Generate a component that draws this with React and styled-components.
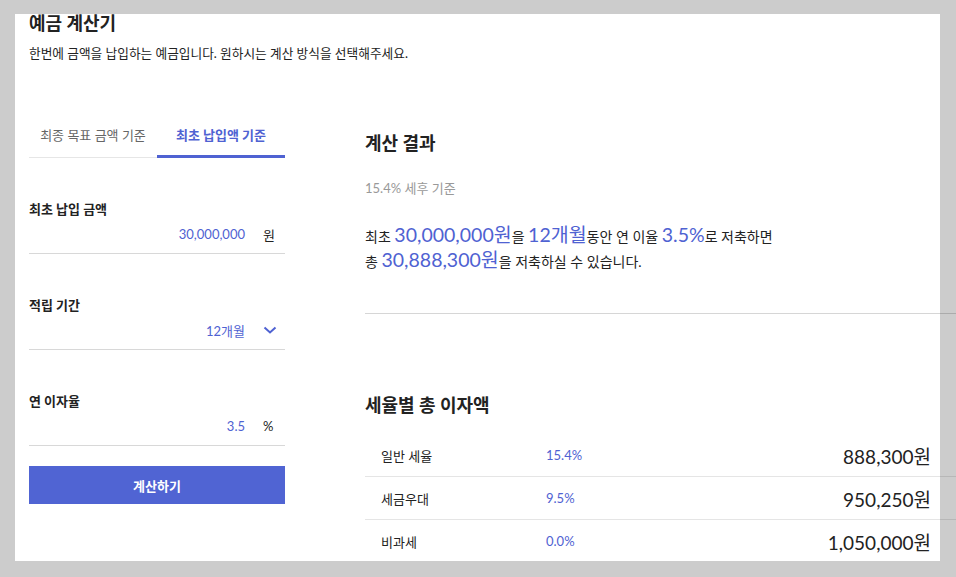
import React, { useState } from "react";
import styled, { createGlobalStyle } from "styled-components";

const GlobalStyle = createGlobalStyle`
    html, body {
        margin: 0;
        padding: 0;
        background: #cccccc;
        overflow: hidden;
    }
    body {
        font-family: Lato, "Noto Sans CJK KR", sans-serif;
        color: #222222;
    }
`;

const BLUE = "#4f62d2";

const Panel = styled.div`
    margin: 15px 16px 15px 15px;
    width: 925px;
    height: 547px;
    background: #ffffff;
    box-sizing: border-box;
    padding-left: 14px;
`;

const Title = styled.h1`
    margin: -1px 0 0;
    font-size: 18px;
    line-height: 18px;
    font-weight: 700;
    color: #222222;
`;

const Desc = styled.p`
    margin: 13px 0 0;
    font-size: 12.7px;
    line-height: 16px;
    color: #222222;
`;

const Body = styled.div`
    display: flex;
    gap: 80px;
    margin-top: 65px;
`;

const LeftColumn = styled.div`
    width: 256px;
    flex-shrink: 0;
`;

const Tabs = styled.div`
    display: flex;
    border-bottom: 1px solid #e6e6e6;
`;

const Tab = styled.div`
    width: 128px;
    text-align: center;
    font-size: 13px;
    line-height: 18px;
    padding-bottom: 11px;
    margin-bottom: -1px;
    cursor: pointer;
    color: ${(p) => (p.$active ? BLUE : "#666666")};
    font-weight: ${(p) => (p.$active ? 700 : 400)};
    border-bottom: 3px solid ${(p) => (p.$active ? BLUE : "transparent")};
`;

const Field = styled.div`
    padding-top: 41px;
    padding-bottom: 9px;
    border-bottom: 1px solid #d8d8d8;
`;

const Label = styled.div`
    font-size: 13px;
    line-height: 20px;
    font-weight: 700;
    color: #222222;
`;

const ValueRow = styled.div`
    display: flex;
    justify-content: flex-end;
    align-items: center;
    margin-top: 5px;
    height: 20px;
    font-size: 13px;
`;

const Value = styled.span`
    color: ${BLUE};
`;

const Unit = styled.span`
    width: 22px;
    margin-left: 18px;
    color: #222222;
    display: flex;
    align-items: center;
`;

const SubmitButton = styled.button`
    display: block;
    width: 100%;
    height: 38px;
    margin-top: 20px;
    border: none;
    background: #5064d3;
    color: #ffffff;
    font-family: inherit;
    font-size: 13px;
    font-weight: 700;
    cursor: pointer;
`;

const RightColumn = styled.div`
    width: 600px;
    flex-shrink: 0;
`;

const SectionTitle = styled.h2`
    margin: ${(p) => p.$top}px 0 0;
    font-size: 18px;
    line-height: 24px;
    font-weight: 700;
    color: #222222;
`;

const Note = styled.div`
    margin-top: 25px;
    font-size: 13px;
    line-height: 16px;
    color: #999999;
`;

const Sentence = styled.p`
    margin: 28px 0 0;
    font-size: 14px;
    line-height: 25px;
    color: #222222;
`;

const Big = styled.span`
    font-size: 19.5px;
    line-height: 1;
    color: ${BLUE};
`;

const Divider = styled.hr`
    margin: 39px 0 0;
    border: none;
    border-top: 1px solid rgba(0, 0, 0, 0.16);
`;

const Table = styled.div`
    margin-top: 17px;
`;

const Row = styled.div`
    display: grid;
    grid-template-columns: 165px 1fr auto;
    align-items: center;
    height: 42px;
    padding: 0 34px 0 16px;
    & + & {
        border-top: 1px solid rgba(0, 0, 0, 0.1);
    }
`;

const RowLabel = styled.span`
    font-size: 13px;
    color: #222222;
`;

const RowRate = styled.span`
    font-size: 13px;
    color: ${BLUE};
`;

const RowAmount = styled.span`
    font-size: 19px;
    color: #222222;
`;

const Chevron = () => (
    <svg width="14" height="8" viewBox="0 0 14 8" fill="none">
        <polyline points="1.5,1.5 7,6.5 12.5,1.5" stroke={BLUE} strokeWidth="2" />
    </svg>
);

const rates = [
    { name: "일반 세율", rate: "15.4%", amount: "888,300원" },
    { name: "세금우대", rate: "9.5%", amount: "950,250원" },
    { name: "비과세", rate: "0.0%", amount: "1,050,000원" },
];

const App = () => {
    const [tab, setTab] = useState(1);

    return (
        <>
            <GlobalStyle />
            <Panel>
                <Title>예금 계산기</Title>
                <Desc>한번에 금액을 납입하는 예금입니다. 원하시는 계산 방식을 선택해주세요.</Desc>
                <Body>
                    <LeftColumn>
                        <Tabs>
                            <Tab $active={tab === 0} onClick={() => setTab(0)}>최종 목표 금액 기준</Tab>
                            <Tab $active={tab === 1} onClick={() => setTab(1)}>최초 납입액 기준</Tab>
                        </Tabs>
                        <Field>
                            <Label>최초 납입 금액</Label>
                            <ValueRow>
                                <Value>30,000,000</Value>
                                <Unit>원</Unit>
                            </ValueRow>
                        </Field>
                        <Field>
                            <Label>적립 기간</Label>
                            <ValueRow>
                                <Value>12개월</Value>
                                <Unit><Chevron /></Unit>
                            </ValueRow>
                        </Field>
                        <Field>
                            <Label>연 이자율</Label>
                            <ValueRow>
                                <Value>3.5</Value>
                                <Unit>%</Unit>
                            </ValueRow>
                        </Field>
                        <SubmitButton>계산하기</SubmitButton>
                    </LeftColumn>
                    <RightColumn>
                        <SectionTitle $top={5}>계산 결과</SectionTitle>
                        <Note>15.4% 세후 기준</Note>
                        <Sentence>
                            최초 <Big>30,000,000원</Big>을 <Big>12개월</Big>동안 연 이율 <Big>3.5%</Big>로 저축하면
                            <br />
                            총 <Big>30,888,300원</Big>을 저축하실 수 있습니다.
                        </Sentence>
                        <Divider />
                        <SectionTitle $top={79}>세율별 총 이자액</SectionTitle>
                        <Table>
                            {rates.map((r) => (
                                <Row key={r.name}>
                                    <RowLabel>{r.name}</RowLabel>
                                    <RowRate>{r.rate}</RowRate>
                                    <RowAmount>{r.amount}</RowAmount>
                                </Row>
                            ))}
                        </Table>
                    </RightColumn>
                </Body>
            </Panel>
        </>
    );
};

export default App;
